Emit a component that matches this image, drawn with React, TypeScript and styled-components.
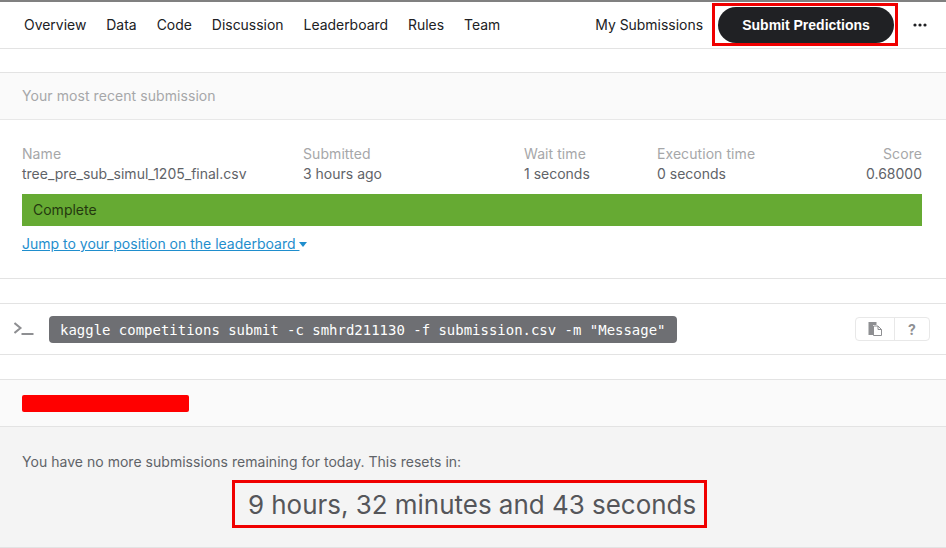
import React from 'react';
import styled, { createGlobalStyle } from 'styled-components';

const GlobalStyle = createGlobalStyle`
  html, body {
    margin: 0;
    padding: 0;
    background: #fff;
    font-family: Inter, "Liberation Sans", sans-serif;
    overflow: hidden;
  }
`;

const Page = styled.div`
  width: 946px;
  height: 548px;
  border-top: 2px solid #808080;
  box-sizing: border-box;
  display: flex;
  flex-direction: column;
`;

const Nav = styled.nav`
  height: 45px;
  padding: 0 0 1px 24px;
  border-bottom: 1px solid #e3e3e3;
  display: flex;
  align-items: center;
  flex-shrink: 0;
`;

const Tabs = styled.div`
  display: flex;
  gap: 20px;
  flex: 1;
`;

const Tab = styled.span`
  font-size: 13.95px;
  color: #202124;
`;

const HighlightBox = styled.div`
  border: 3px solid #f00000;
  width: 186px;
  height: 43px;
  box-sizing: border-box;
  align-self: flex-start;
  margin: 1px 0 0 9px;
  padding: 0 1px 0 3px;
  display: flex;
  align-items: flex-end;
`;

const SubmitButton = styled.button`
  width: 176px;
  height: 36px;
  border: none;
  border-radius: 18px;
  background: #202124;
  color: #fff;
  font-family: "Liberation Sans", Arial, sans-serif;
  font-size: 14px;
  font-weight: 700;
  padding: 0;
`;

const MoreButton = styled.div`
  width: 48px;
  box-sizing: border-box;
  padding: 1px 0 0 15px;
  display: flex;
  color: #202124;
`;

const Panel = styled.section<{ $gap: number }>`
  border-top: 1px solid #e3e3e3;
  margin-top: ${(p) => p.$gap}px;
`;

const PanelTitle = styled.div`
  height: 47px;
  box-sizing: border-box;
  padding: 0 0 2px 22px;
  background: #fafafa;
  border-bottom: 1px solid #e8e8e8;
  display: flex;
  align-items: center;
  font-size: 14px;
  letter-spacing: 0.07px;
  color: #a6a7a9;
`;

const Result = styled.div`
  height: 159px;
  box-sizing: border-box;
  border-bottom: 1px solid #e3e3e3;
  padding: 24px 24px 0 22px;
`;

const Columns = styled.div`
  display: grid;
  grid-template-columns: 281px 221px 133px 1fr auto;
  font-size: 14px;
  line-height: 20px;
`;

const ColumnHead = styled.div<{ $right?: boolean }>`
  color: #a6a7a9;
  letter-spacing: 0.07px;
  text-align: ${(p) => (p.$right ? 'right' : 'left')};
`;

const ColumnValue = styled.div<{ $right?: boolean }>`
  color: #5f6368;
  text-align: ${(p) => (p.$right ? 'right' : 'left')};
`;

const StatusBar = styled.div`
  height: 32px;
  box-sizing: border-box;
  padding: 0 0 1px 11px;
  margin-top: 10px;
  background: #66aa33;
  color: #24380f;
  font-size: 14px;
  display: flex;
  align-items: center;
`;

const JumpLink = styled.a`
  display: inline-flex;
  align-items: center;
  margin-top: 8px;
  font-size: 14px;
  line-height: 20px;
  color: #1f8ecd;
  text-decoration: underline;
  white-space: pre;
`;

const Caret = styled.span`
  width: 0;
  height: 0;
  border-left: 4.5px solid transparent;
  border-right: 4.5px solid transparent;
  border-top: 5px solid #1f8ecd;
`;

const CommandRow = styled.div`
  height: 52px;
  box-sizing: border-box;
  border-top: 1px solid #e3e3e3;
  border-bottom: 1px solid #e3e3e3;
  margin-top: 24px;
  display: flex;
  align-items: center;
  padding-left: 14px;
  flex-shrink: 0;
`;

const CommandText = styled.code`
  margin-left: 15px;
  height: 27px;
  box-sizing: border-box;
  display: flex;
  align-items: center;
  padding: 1px 11px 0 11px;
  background: #6e6f73;
  border-radius: 4px;
  color: #fff;
  font-family: "DejaVu Sans Mono", monospace;
  font-size: 13.98px;
  white-space: pre;
`;

const ButtonGroup = styled.div`
  margin-left: auto;
  margin-right: 16px;
  width: 75px;
  height: 24px;
  box-sizing: border-box;
  border: 1px solid #e8e8e8;
  border-radius: 4px;
  display: grid;
  grid-template-columns: 38px 1fr;
`;

const GroupCell = styled.div`
  display: flex;
  align-items: center;
  justify-content: center;
  color: #8e8f92;
  font-size: 14px;
  font-weight: 700;
  & + & {
    border-left: 1px solid #e8e8e8;
  }
`;

const RedactedHead = styled.div`
  height: 47px;
  box-sizing: border-box;
  background: #fafafa;
  border-bottom: 1px solid #e3e3e3;
  padding-left: 22px;
  display: flex;
  align-items: center;
`;

const Redaction = styled.div`
  width: 167px;
  height: 17px;
  background: #ff0000;
  border-radius: 2px;
`;

const Remaining = styled.div`
  height: 121px;
  box-sizing: border-box;
  background: #f4f4f4;
  border-bottom: 1px solid #e3e3e3;
  padding: 25px 29px 0 22px;
  display: flex;
  flex-direction: column;
  align-items: center;
`;

const RemainingText = styled.div`
  align-self: flex-start;
  font-size: 14px;
  letter-spacing: 0.03px;
  line-height: 20px;
  color: #5f6368;
`;

const Countdown = styled.div`
  margin-top: 8px;
  width: 475px;
  height: 48px;
  box-sizing: border-box;
  border: 3px solid #f00000;
  padding-left: 5px;
  display: flex;
  align-items: center;
  justify-content: center;
  font-size: 25.95px;
  color: #55565a;
`;

const TABS = ['Overview', 'Data', 'Code', 'Discussion', 'Leaderboard', 'Rules', 'Team'];

export default function App() {
  return (
    <Page>
      <GlobalStyle />
      <Nav>
        <Tabs>
          {TABS.map((t) => (
            <Tab key={t}>{t}</Tab>
          ))}
        </Tabs>
        <Tab>My Submissions</Tab>
        <HighlightBox>
          <SubmitButton>Submit Predictions</SubmitButton>
        </HighlightBox>
        <MoreButton>
          <svg width="14" height="4" viewBox="0 0 14 4">
            <circle cx="2" cy="2" r="1.6" fill="currentColor" />
            <circle cx="7" cy="2" r="1.6" fill="currentColor" />
            <circle cx="12" cy="2" r="1.6" fill="currentColor" />
          </svg>
        </MoreButton>
      </Nav>
      <Panel $gap={23}>
        <PanelTitle>Your most recent submission</PanelTitle>
        <Result>
          <Columns>
            <ColumnHead>Name</ColumnHead>
            <ColumnHead>Submitted</ColumnHead>
            <ColumnHead>Wait time</ColumnHead>
            <ColumnHead>Execution time</ColumnHead>
            <ColumnHead $right>Score</ColumnHead>
            <ColumnValue>tree_pre_sub_simul_1205_final.csv</ColumnValue>
            <ColumnValue>3 hours ago</ColumnValue>
            <ColumnValue>1 seconds</ColumnValue>
            <ColumnValue>0 seconds</ColumnValue>
            <ColumnValue $right>0.68000</ColumnValue>
          </Columns>
          <StatusBar>Complete</StatusBar>
          <JumpLink>
            {'Jump to your position on the leaderboard '}
            <Caret />
          </JumpLink>
        </Result>
      </Panel>
      <CommandRow>
        <svg width="20" height="14" viewBox="0 0 20 14" fill="none" stroke="#8e8f92" strokeWidth="2">
          <path d="M0.5 1 L6.5 6 L0.5 11" />
          <path d="M7.5 12 H19.5" />
        </svg>
        <CommandText>kaggle competitions submit -c smhrd211130 -f submission.csv -m "Message"</CommandText>
        <ButtonGroup>
          <GroupCell>
            <svg width="14" height="14" viewBox="0 0 14 14">
              <path d="M0.5 0 H8.5 V3 H5 V13 H0.5 Z" fill="#8e8f92" />
              <path d="M5.5 4 H10 L13.5 7.5 V13.5 H5.5 Z" fill="#fff" stroke="#8e8f92" />
              <path d="M10 4 V7.5 H13.5" fill="none" stroke="#8e8f92" />
            </svg>
          </GroupCell>
          <GroupCell>?</GroupCell>
        </ButtonGroup>
      </CommandRow>
      <Panel $gap={24}>
        <RedactedHead>
          <Redaction />
        </RedactedHead>
        <Remaining>
          <RemainingText>You have no more submissions remaining for today. This resets in:</RemainingText>
          <Countdown>9 hours, 32 minutes and 43 seconds</Countdown>
        </Remaining>
      </Panel>
    </Page>
  );
}
